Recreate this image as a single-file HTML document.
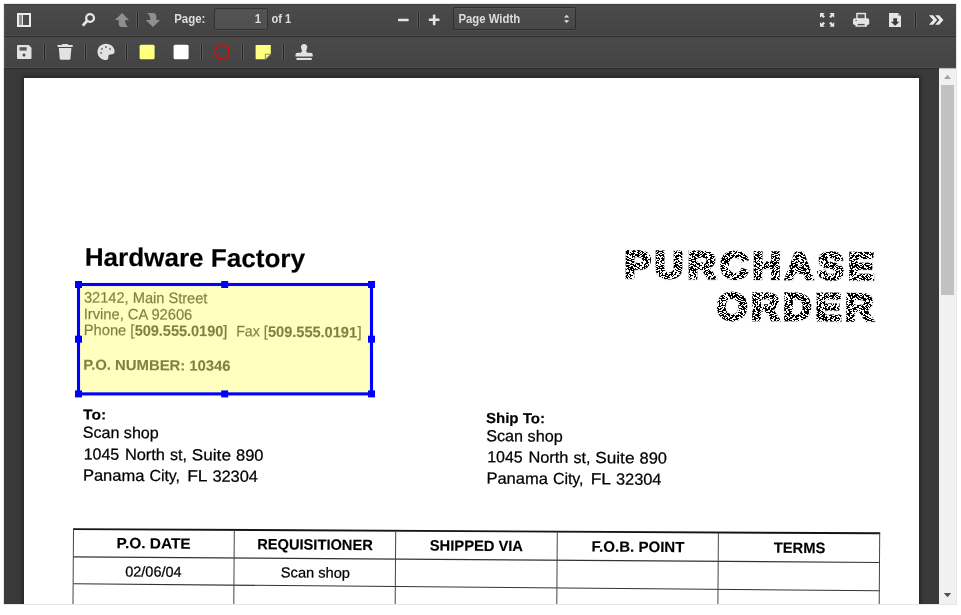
<!DOCTYPE html>
<html>
<head>
<meta charset="utf-8">
<title>PDF Viewer</title>
<style>
html,body{margin:0;padding:0;background:#fff;}
body{width:961px;height:615px;position:relative;overflow:hidden;font-family:"Liberation Sans",sans-serif;}
#frame{position:absolute;left:4px;top:4px;width:952px;height:600px;background:#404040;overflow:hidden;box-shadow:0 0 0 1px #e6e6e6;}
.tb{position:absolute;left:0;width:952px;height:32px;background:linear-gradient(#4b4b4b,#434343);box-shadow:inset 1px 0 0 rgba(255,255,255,.08),inset 0 1px 1px rgba(0,0,0,.15),inset 0 -1px 0 rgba(255,255,255,.05),0 1px 0 rgba(0,0,0,.15),0 1px 1px rgba(0,0,0,.1);}
#tb1{top:0;}
#tb2{top:32px;}
.lbl{position:absolute;color:#d9d9d9;font-size:12px;font-weight:bold;line-height:14px;white-space:nowrap;}
.sep{position:absolute;width:1px;height:17px;background:rgba(0,0,0,.5);box-shadow:0 0 0 1px rgba(255,255,255,.08);}
#pnum{position:absolute;left:210px;top:4px;width:52px;height:20px;border:1px solid rgba(0,0,0,.38);border-radius:2px;background:rgba(255,255,255,.06);box-shadow:inset 0 1px 0 rgba(0,0,0,.05),0 1px 0 rgba(255,255,255,.05);}
#zoom{position:absolute;left:449px;top:3px;width:121px;height:21px;border:1px solid rgba(0,0,0,.38);border-radius:2px;background:rgba(255,255,255,.02);box-shadow:inset 0 1px 0 rgba(255,255,255,.05),0 1px 0 rgba(255,255,255,.05);}
#viewer{position:absolute;left:0;top:64px;width:935px;height:536px;background:#3a3a3a;overflow:hidden;}
#page{position:absolute;left:20px;top:10px;width:895px;height:1160px;background:#fff;box-shadow:0 0 5px 1px rgba(0,0,0,.5);}
#sb{position:absolute;left:935px;top:64px;width:17px;height:536px;background:#f1f1f1;}
#thumb{position:absolute;left:2px;top:17px;width:13px;height:210px;background:#c1c1c1;}
.doc{position:absolute;white-space:nowrap;color:#000;}
</style>
</head>
<body>
<div id="frame">
  <div id="viewer">
    <div id="page"></div>
<!--DOC--><svg id="doc" width="961" height="615" viewBox="0 0 961 615" style="position:absolute;left:-4px;top:-68px;will-change:transform;" font-family="Liberation Sans, sans-serif">
  <defs>
    <pattern id="ht" width="60" height="30" patternUnits="userSpaceOnUse"><path d="M1 0.5h5M9 0.5h5M16 0.5h2M21 0.5h5M29 0.5h1M31 0.5h5M39 0.5h2M45 0.5h3M49 0.5h1M52 0.5h2M55 0.5h1M59 0.5h1M2 1.5h1M6 1.5h2M10 1.5h4M18 1.5h3M25 1.5h1M29 1.5h1M33 1.5h1M35 1.5h1M37 1.5h1M41 1.5h1M44 1.5h2M48 1.5h3M52 1.5h3M56 1.5h4M1 2.5h1M6 2.5h1M9 2.5h4M15 2.5h2M20 2.5h5M26 2.5h4M32 2.5h2M35 2.5h3M40 2.5h1M42 2.5h3M46 2.5h2M49 2.5h5M56 2.5h2M59 2.5h1M0 3.5h1M2 3.5h1M5 3.5h2M11 3.5h2M15 3.5h1M19 3.5h4M24 3.5h5M33 3.5h2M37 3.5h1M40 3.5h2M43 3.5h2M46 3.5h1M48 3.5h4M53 3.5h1M55 3.5h2M59 3.5h1M2 4.5h1M5 4.5h3M9 4.5h4M14 4.5h2M20 4.5h2M23 4.5h2M27 4.5h1M29 4.5h2M34 4.5h2M37 4.5h1M39 4.5h2M44 4.5h4M51 4.5h1M53 4.5h1M55 4.5h2M59 4.5h1M1 5.5h5M8 5.5h2M11 5.5h1M13 5.5h1M17 5.5h4M22 5.5h1M26 5.5h2M30 5.5h3M35 5.5h1M39 5.5h2M44 5.5h1M47 5.5h1M52 5.5h1M55 5.5h1M59 5.5h1M0 6.5h1M5 6.5h4M12 6.5h1M17 6.5h2M21 6.5h3M25 6.5h2M28 6.5h1M30 6.5h1M34 6.5h2M37 6.5h4M45 6.5h2M49 6.5h2M54 6.5h2M58 6.5h2M2 7.5h1M4 7.5h1M7 7.5h3M14 7.5h5M22 7.5h3M26 7.5h2M29 7.5h1M34 7.5h1M36 7.5h2M40 7.5h2M43 7.5h1M45 7.5h1M48 7.5h2M53 7.5h3M57 7.5h1M0 8.5h2M4 8.5h4M12 8.5h4M19 8.5h3M23 8.5h3M27 8.5h1M30 8.5h2M36 8.5h2M39 8.5h1M43 8.5h4M48 8.5h2M51 8.5h4M57 8.5h2M0 9.5h1M3 9.5h3M8 9.5h4M13 9.5h4M21 9.5h4M26 9.5h5M33 9.5h2M36 9.5h4M42 9.5h1M45 9.5h5M51 9.5h5M58 9.5h2M2 10.5h4M8 10.5h2M13 10.5h1M17 10.5h1M19 10.5h1M24 10.5h1M27 10.5h2M33 10.5h2M37 10.5h4M45 10.5h3M50 10.5h2M54 10.5h5M0 11.5h3M6 11.5h1M9 11.5h3M13 11.5h2M16 11.5h1M21 11.5h1M24 11.5h5M32 11.5h4M38 11.5h2M41 11.5h2M45 11.5h1M50 11.5h3M54 11.5h3M58 11.5h2M2 12.5h2M6 12.5h1M9 12.5h2M15 12.5h2M18 12.5h4M24 12.5h5M30 12.5h1M33 12.5h1M37 12.5h2M40 12.5h1M42 12.5h2M46 12.5h5M52 12.5h4M57 12.5h2M0 13.5h2M4 13.5h2M7 13.5h5M14 13.5h2M20 13.5h3M25 13.5h4M31 13.5h4M38 13.5h2M42 13.5h1M44 13.5h2M49 13.5h1M54 13.5h4M2 14.5h2M6 14.5h4M13 14.5h1M18 14.5h1M21 14.5h2M24 14.5h1M27 14.5h1M29 14.5h5M35 14.5h4M40 14.5h2M43 14.5h4M50 14.5h4M58 14.5h2M0 15.5h4M5 15.5h1M8 15.5h2M11 15.5h4M16 15.5h5M23 15.5h3M30 15.5h1M32 15.5h1M35 15.5h5M42 15.5h3M49 15.5h3M55 15.5h3M59 15.5h1M0 16.5h1M3 16.5h4M9 16.5h1M12 16.5h2M15 16.5h4M20 16.5h2M25 16.5h3M32 16.5h3M37 16.5h2M41 16.5h4M46 16.5h1M51 16.5h5M2 17.5h1M4 17.5h1M7 17.5h1M10 17.5h3M15 17.5h2M21 17.5h5M27 17.5h2M32 17.5h1M34 17.5h2M38 17.5h3M43 17.5h5M50 17.5h2M53 17.5h1M55 17.5h2M58 17.5h1M1 18.5h4M6 18.5h2M9 18.5h3M16 18.5h3M23 18.5h4M29 18.5h2M34 18.5h4M39 18.5h5M45 18.5h2M50 18.5h3M55 18.5h5M2 19.5h4M7 19.5h3M13 19.5h5M21 19.5h2M25 19.5h4M31 19.5h5M39 19.5h1M42 19.5h5M48 19.5h3M54 19.5h2M59 19.5h1M1 20.5h3M5 20.5h3M9 20.5h3M14 20.5h1M18 20.5h1M22 20.5h2M27 20.5h5M35 20.5h1M38 20.5h1M43 20.5h1M45 20.5h3M50 20.5h2M54 20.5h2M57 20.5h2M0 21.5h2M4 21.5h5M11 21.5h3M16 21.5h1M18 21.5h2M23 21.5h1M26 21.5h1M31 21.5h5M37 21.5h1M39 21.5h1M41 21.5h1M46 21.5h2M50 21.5h4M56 21.5h1M1 22.5h1M4 22.5h4M11 22.5h1M15 22.5h3M20 22.5h4M25 22.5h4M32 22.5h2M35 22.5h2M41 22.5h2M46 22.5h3M50 22.5h3M54 22.5h5M2 23.5h4M7 23.5h3M11 23.5h5M19 23.5h3M25 23.5h5M31 23.5h1M36 23.5h4M42 23.5h1M45 23.5h3M50 23.5h1M52 23.5h5M58 23.5h1M0 24.5h1M5 24.5h1M8 24.5h2M11 24.5h2M15 24.5h3M22 24.5h1M24 24.5h2M30 24.5h4M35 24.5h1M37 24.5h3M44 24.5h2M48 24.5h1M53 24.5h3M1 25.5h3M8 25.5h5M14 25.5h5M20 25.5h2M23 25.5h1M25 25.5h5M33 25.5h3M39 25.5h3M44 25.5h1M46 25.5h1M48 25.5h1M50 25.5h5M56 25.5h2M0 26.5h3M4 26.5h1M9 26.5h2M12 26.5h5M18 26.5h2M22 26.5h2M26 26.5h3M31 26.5h2M34 26.5h3M39 26.5h1M44 26.5h4M49 26.5h5M55 26.5h1M58 26.5h2M2 27.5h2M6 27.5h1M10 27.5h1M12 27.5h3M16 27.5h2M19 27.5h5M28 27.5h5M37 27.5h2M42 27.5h3M46 27.5h3M52 27.5h2M56 27.5h2M59 27.5h1M0 28.5h5M7 28.5h1M10 28.5h3M17 28.5h2M21 28.5h5M27 28.5h2M30 28.5h4M35 28.5h1M38 28.5h2M42 28.5h1M44 28.5h2M50 28.5h3M54 28.5h1M57 28.5h3M1 29.5h1M6 29.5h2M11 29.5h1M15 29.5h1M18 29.5h3M23 29.5h4M28 29.5h4M33 29.5h5M40 29.5h3M44 29.5h1M48 29.5h1M53 29.5h1M56 29.5h2" stroke="#000" stroke-width="1" fill="none" shape-rendering="crispEdges"/></pattern>
    <filter id="ring" x="-2%" y="-10%" width="104%" height="120%">
      <feMorphology in="SourceAlpha" operator="erode" radius="0.5" result="er"/>
      <feComposite in="SourceAlpha" in2="er" operator="out" result="ring"/>
      <feColorMatrix in="ring" type="matrix" values="0 0 0 0 0  0 0 0 0 0  0 0 0 0 0  0 0 0 .45 0"/>
    </filter>
    <mask id="pom" maskUnits="userSpaceOnUse" x="600" y="230" width="300" height="110">
      <g transform="rotate(0.41 84.0 419.5)" fill="#fff" stroke="#fff" stroke-width="2.8" stroke-linejoin="miter">
    <text transform="translate(624.57 273.73) scale(1.04 1)" x="-1.13" y="0" font-size="37.8" font-weight="bold" letter-spacing="4.016">PURCHASE</text>
    <text transform="translate(716.07 314.87) scale(1.04 1)" x="-0.15" y="0" font-size="37.8" font-weight="bold" letter-spacing="3.591">ORDER</text>
      </g>
    </mask>
  </defs>
  <rect x="600" y="230" width="300" height="110" fill="url(#ht)" mask="url(#pom)"/>
  <g transform="rotate(0.41 84.0 419.5)">
    <text x="83.57" y="265.80" font-size="25.58" textLength="220.37" lengthAdjust="spacingAndGlyphs" font-weight="bold" fill="#000" stroke="#000" stroke-width="0.15">Hardware Factory</text>
    <text x="83.15" y="302.50" font-size="15.08" textLength="123.42" lengthAdjust="spacingAndGlyphs" fill="#000" stroke="#000" stroke-width="0.25">32142, Main Street</text>
    <text x="83.07" y="319.00" font-size="15.08" textLength="108.42" lengthAdjust="spacingAndGlyphs" fill="#000" stroke="#000" stroke-width="0.25">Irvine, CA 92606</text>
    <text x="83.19" y="335.00" font-size="15.08" textLength="50.62" lengthAdjust="spacingAndGlyphs" fill="#000" stroke="#000" stroke-width="0.25">Phone [</text>
    <text x="134.09" y="335.24" font-size="15.08" textLength="88.62" lengthAdjust="spacingAndGlyphs" font-weight="bold" fill="#000" stroke="#000" stroke-width="0.15">509.555.0190</text>
    <text x="222.39" y="335.01" font-size="15.08" textLength="4.42" lengthAdjust="spacingAndGlyphs" fill="#000" stroke="#000" stroke-width="0.25">]</text>
    <text x="235.59" y="335.11" font-size="15.08" textLength="31.42" lengthAdjust="spacingAndGlyphs" fill="#000" stroke="#000" stroke-width="0.25">Fax [</text>
    <text x="267.39" y="335.49" font-size="15.08" textLength="89.02" lengthAdjust="spacingAndGlyphs" font-weight="bold" fill="#000" stroke="#000" stroke-width="0.15">509.555.0191</text>
    <text x="356.89" y="335.05" font-size="15.08" textLength="4.12" lengthAdjust="spacingAndGlyphs" fill="#000" stroke="#000" stroke-width="0.25">]</text>
    <text x="82.86" y="369.71" font-size="14.56" textLength="147.38" lengthAdjust="spacingAndGlyphs" font-weight="bold" fill="#000" stroke="#000" stroke-width="0.15">P.O. NUMBER: 10346</text>
    <text x="83.11" y="419.51" font-size="14.56" textLength="22.98" lengthAdjust="spacingAndGlyphs" font-weight="bold" fill="#000" stroke="#000" stroke-width="0.15">To:</text>
    <text x="82.88" y="437.81" font-size="16.02" textLength="75.99" lengthAdjust="spacingAndGlyphs" fill="#000" stroke="#000" stroke-width="0.25">Scan shop</text>
    <text x="83.94" y="459.50" font-size="16.02" textLength="35.49" lengthAdjust="spacingAndGlyphs" fill="#000" stroke="#000" stroke-width="0.25">1045</text>
    <text x="125.24" y="459.51" font-size="16.02" textLength="39.99" lengthAdjust="spacingAndGlyphs" fill="#000" stroke="#000" stroke-width="0.25">North</text>
    <text x="170.34" y="459.48" font-size="16.02" textLength="16.89" lengthAdjust="spacingAndGlyphs" fill="#000" stroke="#000" stroke-width="0.25">st,</text>
    <text x="192.14" y="459.53" font-size="16.02" textLength="39.09" lengthAdjust="spacingAndGlyphs" fill="#000" stroke="#000" stroke-width="0.25">Suite</text>
    <text x="236.34" y="459.51" font-size="16.02" textLength="27.39" lengthAdjust="spacingAndGlyphs" fill="#000" stroke="#000" stroke-width="0.25">890</text>
    <text x="83.39" y="480.61" font-size="16.02" textLength="61.39" lengthAdjust="spacingAndGlyphs" fill="#000" stroke="#000" stroke-width="0.25">Panama</text>
    <text x="149.89" y="480.53" font-size="16.02" textLength="30.59" lengthAdjust="spacingAndGlyphs" fill="#000" stroke="#000" stroke-width="0.25">City,</text>
    <text x="187.69" y="480.56" font-size="16.02" textLength="20.29" lengthAdjust="spacingAndGlyphs" fill="#000" stroke="#000" stroke-width="0.25">FL</text>
    <text x="212.89" y="480.68" font-size="16.02" textLength="45.49" lengthAdjust="spacingAndGlyphs" fill="#000" stroke="#000" stroke-width="0.25">32304</text>
    <text x="485.93" y="420.02" font-size="14.56" textLength="59.08" lengthAdjust="spacingAndGlyphs" font-weight="bold" fill="#000" stroke="#000" stroke-width="0.15">Ship To:</text>
    <text x="486.40" y="438.32" font-size="16.02" textLength="76.39" lengthAdjust="spacingAndGlyphs" fill="#000" stroke="#000" stroke-width="0.25">Scan shop</text>
    <text x="487.45" y="459.41" font-size="16.02" textLength="35.49" lengthAdjust="spacingAndGlyphs" fill="#000" stroke="#000" stroke-width="0.25">1045</text>
    <text x="528.75" y="459.42" font-size="16.02" textLength="39.99" lengthAdjust="spacingAndGlyphs" fill="#000" stroke="#000" stroke-width="0.25">North</text>
    <text x="573.85" y="459.40" font-size="16.02" textLength="16.89" lengthAdjust="spacingAndGlyphs" fill="#000" stroke="#000" stroke-width="0.25">st,</text>
    <text x="595.65" y="459.44" font-size="16.02" textLength="39.09" lengthAdjust="spacingAndGlyphs" fill="#000" stroke="#000" stroke-width="0.25">Suite</text>
    <text x="639.85" y="459.42" font-size="16.02" textLength="27.39" lengthAdjust="spacingAndGlyphs" fill="#000" stroke="#000" stroke-width="0.25">890</text>
    <text x="486.90" y="480.72" font-size="16.02" textLength="61.39" lengthAdjust="spacingAndGlyphs" fill="#000" stroke="#000" stroke-width="0.25">Panama</text>
    <text x="553.40" y="480.64" font-size="16.02" textLength="30.59" lengthAdjust="spacingAndGlyphs" fill="#000" stroke="#000" stroke-width="0.25">City,</text>
    <text x="591.20" y="480.67" font-size="16.02" textLength="20.29" lengthAdjust="spacingAndGlyphs" fill="#000" stroke="#000" stroke-width="0.25">FL</text>
    <text x="616.41" y="480.79" font-size="16.02" textLength="45.49" lengthAdjust="spacingAndGlyphs" fill="#000" stroke="#000" stroke-width="0.25">32304</text>
    <line x1="73.78" y1="529.18" x2="880.99" y2="527.60" stroke="#151515" stroke-width="1.9"/>
    <line x1="74.48" y1="556.94" x2="880.70" y2="556.75" stroke="#333" stroke-width="1.1"/>
    <line x1="74.68" y1="583.80" x2="880.91" y2="585.10" stroke="#333" stroke-width="1.1"/>
    <line x1="74.28" y1="529.17" x2="74.31" y2="609.18" stroke="#444" stroke-width="1.0"/>
    <line x1="235.09" y1="528.86" x2="235.11" y2="608.86" stroke="#444" stroke-width="1.0"/>
    <line x1="396.49" y1="528.55" x2="396.51" y2="608.55" stroke="#444" stroke-width="1.0"/>
    <line x1="558.09" y1="528.23" x2="558.11" y2="608.23" stroke="#444" stroke-width="1.0"/>
    <line x1="719.19" y1="527.92" x2="719.21" y2="607.92" stroke="#444" stroke-width="1.0"/>
    <line x1="880.49" y1="527.60" x2="880.52" y2="607.60" stroke="#444" stroke-width="1.0"/>
    <text x="117.52" y="547.96" font-size="14.98" textLength="74.01" lengthAdjust="spacingAndGlyphs" font-weight="bold" fill="#000" stroke="#000" stroke-width="0.15">P.O. DATE</text>
    <text x="258.12" y="548.06" font-size="14.98" textLength="115.61" lengthAdjust="spacingAndGlyphs" font-weight="bold" fill="#000" stroke="#000" stroke-width="0.15">REQUISITIONER</text>
    <text x="430.72" y="548.02" font-size="14.98" textLength="93.21" lengthAdjust="spacingAndGlyphs" font-weight="bold" fill="#000" stroke="#000" stroke-width="0.15">SHIPPED VIA</text>
    <text x="592.53" y="547.96" font-size="14.98" textLength="92.81" lengthAdjust="spacingAndGlyphs" font-weight="bold" fill="#000" stroke="#000" stroke-width="0.15">F.O.B. POINT</text>
    <text x="774.73" y="547.86" font-size="14.98" textLength="51.61" lengthAdjust="spacingAndGlyphs" font-weight="bold" fill="#000" stroke="#000" stroke-width="0.15">TERMS</text>
    <text x="126.44" y="576.10" font-size="14.35" textLength="56.16" lengthAdjust="spacingAndGlyphs" fill="#000" stroke="#000" stroke-width="0.25">02/06/04</text>
    <text x="281.94" y="575.89" font-size="14.35" textLength="69.16" lengthAdjust="spacingAndGlyphs" fill="#000" stroke="#000" stroke-width="0.25">Scan shop</text>
        <g fill="#000" stroke="#000" stroke-width="2.8" stroke-linejoin="miter" filter="url(#ring)">
    <text transform="translate(624.57 273.73) scale(1.04 1)" x="-1.13" y="0" font-size="37.8" font-weight="bold" letter-spacing="4.016">PURCHASE</text>
    <text transform="translate(716.07 314.87) scale(1.04 1)" x="-0.15" y="0" font-size="37.8" font-weight="bold" letter-spacing="3.591">ORDER</text>
    </g>
    
  </g>
  <!-- annotation -->
  <rect x="78.5" y="284.5" width="293" height="109.4" fill="#ffff80" fill-opacity=".5" stroke="#0000ff" stroke-width="3.1"/>
  <g fill="#0000ff">
    <rect x="75" y="281" width="7" height="7"/><rect x="221.200" y="281" width="7" height="7"/><rect x="368" y="281" width="7" height="7"/>
    <rect x="75" y="335.700" width="7" height="7"/><rect x="368" y="335.700" width="7" height="7"/>
    <rect x="75" y="390.400" width="7" height="7"/><rect x="221.200" y="390.400" width="7" height="7"/><rect x="368" y="390.400" width="7" height="7"/>
  </g>
</svg><!--/DOC-->
  </div>
  <div id="sb"><div id="thumb"></div>
    <svg width="17" height="536" style="position:absolute;left:0;top:0"><path d="M5 11 L8.500 6.800 L12 11 Z" fill="#a3a3a3"/><path d="M4.800 525 L12.200 525 L8.500 529.200 Z" fill="#505050"/></svg>
  </div>
  <div class="tb" id="tb2"></div>
  <div class="tb" id="tb1">
    <div id="pnum"></div>
    <div id="zoom"></div>
  </div>
</div>

<svg id="icons" width="961" height="615" viewBox="0 0 961 615" style="position:absolute;left:0;top:0;pointer-events:none;will-change:transform;">
  <g id="tbtext" font-family="Liberation Sans, sans-serif" font-size="12" font-weight="bold" fill="#dcdcdc">
    <text x="174.200" y="22.500" textLength="31.200" lengthAdjust="spacingAndGlyphs">Page:</text>
    <text x="254.800" y="22.500" textLength="6.400" lengthAdjust="spacingAndGlyphs">1</text>
    <text x="271.500" y="22.500" textLength="19.800" lengthAdjust="spacingAndGlyphs">of 1</text>
    <text x="458.400" y="22.700" textLength="61.800" lengthAdjust="spacingAndGlyphs">Page Width</text>
  </g>
  <!-- row 1 -->
  <g id="i-sidebar">
    <rect x="17" y="13.5" width="14" height="14" fill="#1c1c1c" opacity=".35"/>
    <rect x="17" y="13" width="14" height="14" fill="#ececec"/>
    <rect x="19" y="15" width="3" height="10" fill="#8d8d8d"/>
    <rect x="23" y="15" width="6" height="10" fill="#4a4a4a"/>
  </g>
  <g id="i-find" fill="none" stroke="#e6e6e6">
    <circle cx="90.050" cy="17.950" r="3.900" stroke-width="2.300"/>
    <path d="M87 21.100 L83.500 24.700" stroke-width="2.800" stroke-linecap="round"/>
  </g>
  <path id="i-up" fill="#8f8f8f" d="M122.060 12.950 L129.100 20.100 L125.300 20.100 C125 22.500 125.500 25 127.800 26.800 L127.800 27.100 L122 27.100 C119.800 27.100 118.700 25.500 118.700 23.500 L118.700 20.100 L114.950 20.100 Z"/>
  <rect x="136" y="11.5" width="3" height="17" fill="#fff" opacity=".09"/><rect x="137" y="11.5" width="1" height="17" fill="#262626"/>
  <path id="i-down" fill="#8f8f8f" d="M153 26.900 L145.800 20 L150.200 20 C150.500 17.500 150 15 147.300 13.200 L147.300 12.950 L153 12.950 C155.200 12.950 156.300 14.500 156.300 16.500 L156.300 20 L160.100 20 Z"/>
  <g id="i-minus" fill="#e4e4e4"><rect x="398" y="18.7" width="10.6" height="2.6" rx=".6"/></g>
  <rect x="417" y="11.5" width="3" height="17" fill="#fff" opacity=".09"/><rect x="418" y="11.5" width="1" height="17" fill="#262626"/>
  <g id="i-plus" fill="#e4e4e4"><rect x="428.8" y="18.5" width="10.7" height="2.6" rx=".6"/><rect x="432.85" y="14.4" width="2.6" height="10.8" rx=".6"/></g>
  <g id="i-sel" fill="#e0e0e0"><path d="M564 17.6 L566.6 14.8 L569.2 17.6 Z"/><path d="M564 20.2 L566.6 23 L569.2 20.2 Z"/></g>
  <g id="i-full" fill="#e6e6e6">
    <path d="M820.00 13.10 L824.70 13.10 L823.15 14.65 L825.00 16.50 L823.40 18.10 L821.55 16.25 L820.00 17.80 Z"/>
    <path d="M834.20 13.10 L829.50 13.10 L831.05 14.65 L829.20 16.50 L830.80 18.10 L832.65 16.25 L834.20 17.80 Z"/>
    <path d="M820.00 26.80 L824.70 26.80 L823.15 25.25 L825.00 23.40 L823.40 21.80 L821.55 23.65 L820.00 22.10 Z"/>
    <path d="M834.20 26.80 L829.50 26.80 L831.05 25.25 L829.20 23.40 L830.80 21.80 L832.65 23.65 L834.20 22.10 Z"/>
  </g>
  <g id="i-print">
    <rect x="856.200" y="12.800" width="9.900" height="7" rx=".800" fill="#e4e4e4"/>
    <rect x="857.700" y="14.300" width="6.900" height="4.500" fill="#555"/>
    <rect x="853" y="18.200" width="16.200" height="6.800" rx="1.800" fill="#e4e4e4"/>
    <rect x="855.300" y="20.100" width="1.800" height="1" fill="#666"/>
    <rect x="855.400" y="24" width="11.600" height="2.800" rx=".500" fill="#e4e4e4"/>
    <rect x="857.600" y="23.900" width="7" height="1.400" fill="#505050"/>
  </g>
  <g id="i-dl">
    <path fill="#e4e4e4" d="M889 12.900 L898 12.900 L901 16 L901 26.900 L889 26.900 Z"/>
    <path fill="#6a6a6a" d="M898 12.900 L898 16 L901 16 Z" opacity=".5"/>
    <path fill="#3a3a3a" d="M893.300 18.200 L897 18.200 L897 21.700 L899.500 21.700 L895.150 25.800 L890.800 21.700 L893.300 21.700 Z"/>
  </g>
  <rect x="914" y="11.5" width="3" height="17" fill="#fff" opacity=".09"/><rect x="915" y="11.5" width="1" height="17" fill="#262626"/>
  <g id="i-more" fill="#ebebeb">
    <path d="M929 15.200 L933 15.200 L937.200 20 L933 24.800 L929 24.800 L933.200 20 Z"/>
    <path d="M935.200 15.200 L939.200 15.200 L943.400 20 L939.200 24.800 L935.200 24.800 L939.400 20 Z"/>
  </g>
  <!-- row 2 -->
  <g id="i-save">
    <path fill="#e2e2e2" d="M18 45 L28.7 45 L31.5 47.8 L31.5 58 Q31.5 59 30.5 59 L18 59 Q17 59 17 58 L17 46 Q17 45 18 45 Z"/>
    <rect x="19.5" y="47.2" width="7.2" height="3.4" fill="#5a5a5a"/>
    <circle cx="24" cy="55" r="1.5" fill="#4a4a4a"/>
  </g>
  <rect x="43" y="43.5" width="3" height="17" fill="#fff" opacity=".09"/><rect x="44" y="43.5" width="1" height="17" fill="#262626"/>
  <g id="i-trash" fill="#e2e2e2">
    <path d="M62.300 44 L67.900 44 L68.500 45 L72.700 45 L72.700 47 L57.600 47 L57.600 45 L61.700 45 Z"/>
    <path d="M58.800 48 L71.400 48 L70.400 59 Q70.300 59.800 69.400 59.800 L60.800 59.800 Q59.900 59.800 59.800 59 Z"/>
  </g>
  <rect x="84" y="43.5" width="3" height="17" fill="#fff" opacity=".09"/><rect x="85" y="43.5" width="1" height="17" fill="#262626"/>
  <g id="i-palette">
    <path fill="#e2e2e2" d="M106 43.7 C110.800 43.7 114.600 47.300 114.600 51.600 C114.600 54.200 112.400 54.400 110.800 54.400 C109.000 54.400 108.300 55.300 108.300 56.600 C108.300 58.000 108.700 60.000 106.200 60.000 C101.400 60.000 97.500 56.400 97.500 51.900 C97.500 47.300 101.300 43.700 106 43.700 Z"/>
    <rect x="100.900" y="47.900" width="2" height="2" fill="#8a8a8a"/>
    <rect x="105" y="46" width="2" height="2" fill="#8a8a8a"/>
    <rect x="109" y="47.900" width="2" height="2" fill="#8a8a8a"/>
    <rect x="100.100" y="51.900" width="2" height="2" fill="#8a8a8a"/>
  </g>
  <rect x="125" y="43.5" width="3" height="17" fill="#fff" opacity=".09"/><rect x="126" y="43.5" width="1" height="17" fill="#262626"/>
  <rect x="139.600" y="44.700" width="15" height="14.500" rx="1.500" fill="#ffff80"/>
  <rect x="173.600" y="44.700" width="15" height="14.500" rx="1.500" fill="#ffffff"/>
  <rect x="200" y="43.5" width="3" height="17" fill="#fff" opacity=".09"/><rect x="201" y="43.5" width="1" height="17" fill="#262626"/>
  <circle cx="222.100" cy="52" r="7" fill="none" stroke="#df0a0a" stroke-width="1.600"/>
  <rect x="241" y="43.5" width="3" height="17" fill="#fff" opacity=".09"/><rect x="242" y="43.5" width="1" height="17" fill="#262626"/>
  <g id="i-note">
    <path fill="#ffff80" d="M255.600 45 L270.800 45 L270.800 54.600 L266 59.300 L255.600 59.300 Z"/>
    <path fill="#ffffb8" stroke="#5a5a30" stroke-width=".7" d="M265.300 59 L265.300 54.300 L270.600 54.300 Z"/>
  </g>
  <rect x="282" y="43.5" width="3" height="17" fill="#fff" opacity=".09"/><rect x="283" y="43.5" width="1" height="17" fill="#262626"/>
  <g id="i-stamp" fill="#e2e2e2">
    <path d="M304 44 C306 44 307.300 45.400 307.300 47.100 C307.300 48.600 306.300 49.500 306.300 51 C306.300 52.200 307.200 52.800 308.500 52.800 L310.500 52.800 C311.900 52.800 312.700 53.700 312.700 55 L312.700 56.600 L295.500 56.600 L295.500 55 C295.500 53.700 296.300 52.800 297.700 52.800 L299.700 52.800 C301 52.800 301.900 52.200 301.900 51 C301.900 49.500 300.900 48.600 300.900 47.100 C300.900 45.400 302.200 44 304 44 Z"/>
    <rect x="296.500" y="57.900" width="15.200" height="2.100"/>
  </g>
</svg>
</body>
</html>
